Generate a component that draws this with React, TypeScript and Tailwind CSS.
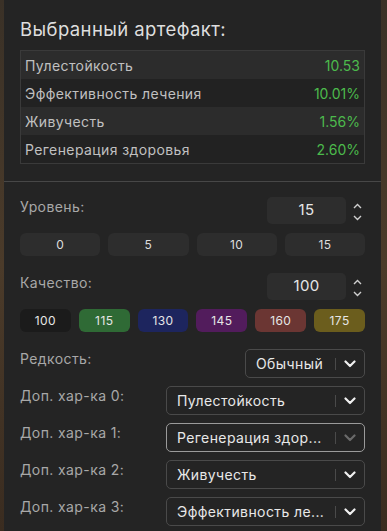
import React from "react";

const stats = [
  ["Пулестойкость", "10.53"],
  ["Эффективность лечения", "10.01%"],
  ["Живучесть", "1.56%"],
  ["Регенерация здоровья", "2.60%"],
];

const quality = [
  ["100", "bg-[#1b1b1b]"],
  ["115", "bg-[#2f6a35]"],
  ["130", "bg-[#1d255e]"],
  ["145", "bg-[#521c5c]"],
  ["160", "bg-[#6b3633]"],
  ["175", "bg-[#6b5d1d]"],
];

function Chevron({ dim }: { dim?: boolean }) {
  return (
    <svg width="12" height="8" viewBox="0 0 12 8" className="block">
      <path d="M1.5 1.5 L6 6 L10.5 1.5" fill="none" stroke={dim ? "#6a6a6a" : "#f0f0f0"} strokeWidth="2.2" strokeLinecap="round" strokeLinejoin="round" />
    </svg>
  );
}

function Spinner() {
  return (
    <div className="flex flex-col items-center justify-center gap-[6px] w-[16px] pt-[6px]">
      <svg width="9" height="6" viewBox="0 0 9 6"><path d="M1 5 L4.5 1.5 L8 5" fill="none" stroke="#cfcfcf" strokeWidth="1.4" /></svg>
      <svg width="9" height="6" viewBox="0 0 9 6"><path d="M1 1 L4.5 4.5 L8 1" fill="none" stroke="#cfcfcf" strokeWidth="1.4" /></svg>
    </div>
  );
}

function NumInput({ value }: { value: string }) {
  return (
    <div className="flex items-start gap-[3px]">
      <div className="w-[79px] h-[27px] rounded-[5px] bg-[#2d2d2d] flex items-center justify-center text-[15px] text-[#e6e6e6]">{value}</div>
      <Spinner />
    </div>
  );
}

function Select({ text, w, active, dim }: { text: string; w: string; active?: boolean; dim?: boolean }) {
  return (
    <div className={`${w} h-[29px] rounded-[5px] border ${active ? "border-[#9a9a9a]" : "border-[#4a4a4a]"} flex items-center pl-[10px] pr-[8px]`}>
      <span className="flex-1 text-[14px] text-[#e8e8e8] truncate whitespace-nowrap">{text}</span>
      <span className="w-px h-[12px] bg-[#4a4a4a] mx-[8px]" />
      <Chevron dim={dim} />
    </div>
  );
}

export default function App() {
  return (
    <div className="h-[531px] w-[387px] bg-gradient-to-b from-[#3a3127] via-[#4b3b2a] to-[#3a2c20] overflow-hidden tracking-[0.4px]" style={{ fontFamily: "Inter, 'Noto Sans', sans-serif" }}>
      <div className="ml-[4px] w-[377px] h-full bg-[#242424] flex flex-col">
        <div className="px-[16px] pt-[17px] pb-[17px] border-b border-[#474747]">
          <div className="text-[18.5px] leading-[24px] text-[#dedede]">Выбранный артефакт:</div>
          <div className="mt-[9px] border border-[#3a3a3a]">
            {stats.map(([k, v], i) => (
              <div key={k} className={`h-[28px] flex items-center justify-between px-[4px] text-[14px] ${i % 2 === 0 ? "bg-[#2c2c2c]" : "bg-[#222222]"}`}>
                <span className="text-[#c0c0c0]">{k}</span>
                <span className="text-[#4cba4c] tracking-normal">{v}</span>
              </div>
            ))}
          </div>
        </div>
        <div className="px-[16px] pt-[15px] flex flex-col">
          <div className="flex items-start justify-between">
            <span className="text-[14px] leading-[20px] text-[#a8a8a8]">Уровень:</span>
            <NumInput value="15" />
          </div>
          <div className="mt-[9px] grid grid-cols-4 gap-[8px]">
            {["0", "5", "10", "15"].map((n) => (
              <div key={n} className="h-[23px] rounded-[6px] bg-[#2d2d2d] flex items-center justify-center text-[12px] text-[#dddddd]">{n}</div>
            ))}
          </div>
          <div className="mt-[17px] flex items-start justify-between">
            <span className="text-[14px] leading-[20px] text-[#a8a8a8]">Качество:</span>
            <NumInput value="100" />
          </div>
          <div className="mt-[9px] grid grid-cols-6 gap-[8px]">
            {quality.map(([n, c]) => (
              <div key={n} className={`h-[23px] rounded-[6px] ${c} flex items-center justify-center text-[12px] text-[#e6e6e6]`}>{n}</div>
            ))}
          </div>
          <div className="mt-[17px] flex items-start justify-between">
            <span className="text-[14px] leading-[20px] text-[#a8a8a8]">Редкость:</span>
            <Select text="Обычный" w="w-[120px]" />
          </div>
          {[
            ["Доп. хар-ка 0:", "Пулестойкость", false],
            ["Доп. хар-ка 1:", "Регенерация здор...", true],
            ["Доп. хар-ка 2:", "Живучесть", false],
            ["Доп. хар-ка 3:", "Эффективность ле...", false],
          ].map(([l, t, a]) => (
            <div key={l as string} className="mt-[8px] flex items-start justify-between">
              <span className="text-[14px] leading-[20px] text-[#a8a8a8]">{l}</span>
              <Select text={t as string} w="w-[199px]" active={a as boolean} dim={a as boolean} />
            </div>
          ))}
        </div>
      </div>
    </div>
  );
}
